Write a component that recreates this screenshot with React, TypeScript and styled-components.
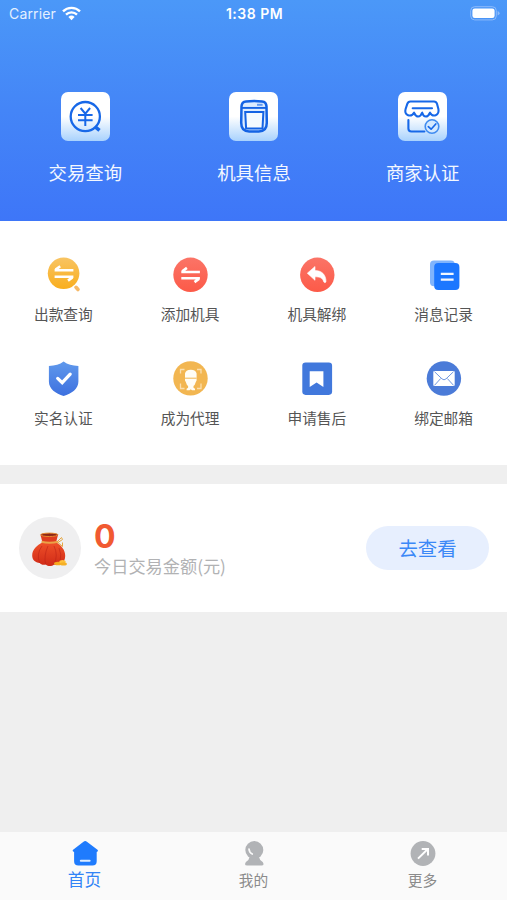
import React from "react";
import styled, { createGlobalStyle } from "styled-components";

const GlobalStyle = createGlobalStyle`
  * { box-sizing: border-box; }
  body {
    margin: 0;
    background: #efefef;
    font-family: "Noto Sans CJK SC", sans-serif;
  }
`;

const Screen = styled.div`
  display: flex;
  flex-direction: column;
  height: 900px;
  background: #efefef;
`;

const Hero = styled.header`
  height: 221px;
  flex: none;
  background: linear-gradient(180deg, #4b98f8 0%, #4485f7 50%, #3e76f8 100%);
`;

const StatusBar = styled.div`
  display: grid;
  grid-template-columns: 1fr auto 1fr;
  align-items: center;
  height: 28px;
  padding: 0 7px 0 9px;
  color: #fff;
  font-family: Inter, sans-serif;
  font-size: 14px;
  line-height: 28px;
`;

const Carrier = styled.div`
  display: flex;
  align-items: center;
  gap: 6px;
  color: #e4f0ff;
  letter-spacing: 0.15px;
  svg { margin-top: -2px; }
`;

const Clock = styled.div`
  font-weight: 600;
  font-size: 14px;
  letter-spacing: 0.5px;
`;

const BatterySlot = styled.div`
  display: flex;
  justify-content: flex-end;
  padding-bottom: 2px;
`;

const HeroActions = styled.nav`
  display: grid;
  grid-template-columns: repeat(3, 1fr);
  padding: 64px 0 0 1px;
`;

const HeroAction = styled.div`
  display: flex;
  flex-direction: column;
  align-items: center;
  gap: 17px;
  color: #f3f8ff;
  font-size: 18.4px;
  line-height: 28px;
`;

const Tile = styled.div`
  width: 49px;
  height: 49px;
  border-radius: 7px;
  background: linear-gradient(180deg, #fff 0%, #fff 50%, #a9d2fd 100%);
`;

const Services = styled.section`
  display: grid;
  grid-template-columns: repeat(4, 1fr);
  grid-auto-rows: 104px;
  height: 244px;
  flex: none;
  padding-top: 36px;
  background: #fff;
`;

const Service = styled.div`
  display: flex;
  flex-direction: column;
  align-items: center;
  gap: 10px;
  color: #555;
  font-size: 14.7px;
  line-height: 22px;
  svg { display: block; }
`;

const Summary = styled.section`
  display: flex;
  align-items: center;
  height: 128px;
  flex: none;
  margin-top: 19px;
  padding: 0 18px 0 19px;
  background: #fff;
`;

const Avatar = styled.div`
  width: 62px;
  height: 62px;
  border-radius: 50%;
  background: #efeff0;
`;

const Figures = styled.div`
  flex: 1;
  padding: 1px 0 0 13px;
`;

const Amount = styled.div`
  color: #f15a31;
  font: 750 32px/35px Inter, sans-serif;
`;

const Caption = styled.div`
  color: #b1b2b4;
  font-size: 17.2px;
  line-height: 24px;
`;

const ViewButton = styled.button`
  width: 123px;
  height: 44px;
  padding: 0;
  border: 0;
  border-radius: 22px;
  background: #e7effe;
  color: #3b88f7;
  font: 19.4px/44px "Noto Sans CJK SC", sans-serif;
`;

const TabBar = styled.nav`
  display: grid;
  grid-template-columns: repeat(3, 1fr);
  height: 68px;
  flex: none;
  margin-top: auto;
  background: #fafafa;
`;

const Tab = styled.div<{ $active?: boolean }>`
  display: flex;
  flex-direction: column;
  align-items: center;
  padding-top: 8px;
  color: ${(p) => (p.$active ? "#3384f6" : "#8b8b8b")};
  font-size: ${(p) => (p.$active ? "16.7px" : "14.7px")};
  line-height: ${(p) => (p.$active ? "22px" : "24px")};
  svg { display: block; }
`;

const WifiIcon = () => (
  <svg width="19" height="15" viewBox="0 0 19 15" fill="none" stroke="#fff" strokeWidth="2.4">
    <path d="M1 5.3a12.2 12.2 0 0 1 17 0M4 8.6a8 8 0 0 1 11 0" />
    <path d="M6.4 11a4.5 4.5 0 0 1 6.2 0L9.5 14.3z" fill="#fff" stroke="none" />
  </svg>
);

const BatteryIcon = () => (
  <svg width="30" height="15" viewBox="0 0 30 15">
    <rect x=".7" y=".7" width="25.6" height="13.2" rx="4" fill="none" stroke="#8dbbfa" />
    <rect x="2.4" y="2.5" width="22.2" height="9.6" rx="2.3" fill="#fff" />
    <path d="M27.6 5v4.6q2-.8 2-2.3T27.6 5z" fill="#8dbbfa" />
  </svg>
);

const TradeIcon = () => (
  <svg width="49" height="49" viewBox="0 0 49 49" fill="none" stroke="#1768e8" strokeWidth="2">
    <circle cx="24.3" cy="24.6" r="14.6" strokeWidth="2.3" />
    <path d="M34.5 35.2l4 3.2" strokeWidth="3.6" />
    <path d="M19.6 16l4.7 5.7 4.8-5.7M17 22.9h14.6M17 28.2h14.6M24.3 22v12" />
  </svg>
);

const DeviceIcon = () => (
  <svg width="49" height="49" viewBox="0 0 49 49" fill="none" stroke="#1463e4">
    <path
      d="M17 9.4q8-.7 16 0 4.300.4 4.500 5l.3 16.400q0 8.600-8 8.800h-9.600q-8-.2-8-8.800l.3-16.400q.2-4.600 4.500-5z"
      strokeWidth="2.5"
      fill="#dcecff"
    />
    <path d="M12.800 15.900h24.400" strokeWidth="1.9" />
    <path d="M28 12.800h5.600" strokeWidth="2" opacity=".6" />
    <path d="M16.200 19.900h18.200l-.9 16.500H17.100z" strokeWidth="2" fill="#f4faff" />
  </svg>
);

const ShopIcon = () => (
  <svg
    width="49"
    height="49"
    viewBox="0 0 49 49"
    fill="none"
    stroke="#1768e8"
    strokeWidth="2.1"
    strokeLinejoin="round"
    strokeLinecap="round"
  >
    <path d="M12.4 9.500h23.600q2.300 0 3 2.300l1.400 5.200c1.200 6.500-5.600 8.700-8.400 3.700-2.300 5.100-6.200 5.100-7.800 0-2 5.100-5.800 5.100-8.200 0-2.800 5-10.200 2.800-8.400-3.700l1.700-5.200q.8-2.300 3.100-2.300z" />
    <path d="M14.700 16.200h19.300M10.400 28v8.500q0 3 3 3h13" />
    <circle cx="34" cy="34.5" r="6.8" strokeWidth="1.6" fill="#d4e9ff" stroke="#408cf0" />
    <path d="M30.300 34.700l2.800 2.500 4.700-5.200" strokeWidth="1.7" />
  </svg>
);

const Gradient = ({ id, from, to }: { id: string; from: string; to: string }) => (
  <defs>
    <linearGradient id={id} x1="0" y1="0" x2="0" y2="1">
      <stop stopColor={from} />
      <stop offset="1" stopColor={to} />
    </linearGradient>
  </defs>
);

const SearchPayIcon = () => (
  <svg width="36" height="36" viewBox="0 0 36 36">
    <Gradient id="pay" from="#f8c463" to="#f9ae1d" />
    <circle cx="18.6" cy="16.3" r="15.8" fill="url(#pay)" />
    <path d="M31 30.300l2 2.200" stroke="#f6b968" strokeWidth="3.6" strokeLinecap="round" />
    <path d="M9.600 13.300h18.800M10.600 12.600l4.600-3.300M9.600 19.700h18.800M27.400 20.400l-4.400 3.200" stroke="#fff" strokeWidth="2.6" />
  </svg>
);

const AddDeviceIcon = () => (
  <svg width="36" height="36" viewBox="0 0 36 36">
    <Gradient id="add" from="#fb7467" to="#fc5a48" />
    <circle cx="18.5" cy="17.8" r="17.2" fill="url(#add)" />
    <path d="M9.300 15h18.600M10.300 14.300l4.600-3.400M9.300 21.200h18.600M26.900 21.900l-4.400 3.200" stroke="#fff" strokeWidth="2.6" />
  </svg>
);

const UnbindIcon = () => (
  <svg width="36" height="36" viewBox="0 0 36 36">
    <Gradient id="unbind" from="#fb7467" to="#fc5a48" />
    <circle cx="18.3" cy="17.8" r="17.2" fill="url(#unbind)" />
    <path
      d="M8.300 16.200l7.700-6.700v4c6.800 0 11.200 4.400 11 11.400-.8 1-1.700.8-2.200 0-1.300-4-3.800-5.100-8.800-5.100v3.500z"
      fill="#fff"
      stroke="#fff"
      strokeWidth=".6"
      strokeLinejoin="round"
    />
  </svg>
);

const MessageIcon = () => (
  <svg width="36" height="36" viewBox="0 0 36 36">
    <rect x="4" y="3.6" width="24.8" height="25.6" rx="4" fill="#80b4fc" />
    <rect x="8.2" y="6" width="25.2" height="26.9" rx="4" fill="#1c77ff" />
    <path d="M14.800 16.900h12.800M14.800 22.700h12.800" stroke="#f3f8ff" strokeWidth="2.2" />
  </svg>
);

const ShieldIcon = () => (
  <svg width="36" height="36" viewBox="0 0 36 36">
    <Gradient id="shield" from="#6099ec" to="#3d70df" />
    <path
      d="M18.600.6c4 3 8.600 4.200 14.800 4.500v15.400c0 7.500-6.800 12-14.800 14.600C10.700 32.500 3.900 28 3.900 20.500V5.100C10.100 4.800 14.700 3.600 18.600.6z"
      fill="url(#shield)"
    />
    <path d="M12.700 17.400l4.500 4.300 8-8.500" fill="none" stroke="#fff" strokeWidth="3.2" strokeLinecap="round" />
  </svg>
);

const AgentIcon = () => (
  <svg width="36" height="36" viewBox="0 0 36 36">
    <circle cx="18.5" cy="17.4" r="17.2" fill="#f2b651" />
    <path
      d="M8.500 12.500V8.500h4M25 8.500h4v4M8.500 22.500v5h4M25 27.500h4v-5"
      fill="none"
      stroke="#fbdfae"
      strokeWidth="1.3"
    />
    <path
      d="M13 12.500q.6-3.800 5.800-3.800t5.800 3.800v5q.4 2-.8 3.500-.8 3-2.300 4v1.800l1.500.9v1.500h-3l-1.200-1-1.200 1h-3v-1.500l1.500-.9V25q-1.500-1-2.300-4-1.200-1.500-.8-3.500z"
      fill="#fffdf5"
    />
    <path d="M13 17.200h11.600" stroke="#f2b651" strokeWidth="1" />
  </svg>
);

const BookmarkIcon = () => (
  <svg width="36" height="36" viewBox="0 0 36 36">
    <rect x="3.3" y="1.5" width="29.8" height="32.4" rx="3.3" fill="#4178dc" />
    <path d="M10.700 10.200h13.700v15.800l-6.800-4.400-6.900 4.400z" fill="#fff" />
  </svg>
);

const MailIcon = () => (
  <svg width="36" height="36" viewBox="0 0 36 36">
    <circle cx="17.9" cy="17.5" r="17.2" fill="#4b7bd8" />
    <rect x="7.3" y="9.9" width="21.4" height="15.2" rx="1" fill="#fff" />
    <path
      d="M8.500 10.700l7.500 7.200q2 1.800 4 0l7.500-7.200M8.500 24.300l6.200-6.800M27.500 24.300l-6.200-6.800"
      fill="none"
      stroke="#7097df"
      strokeWidth="1"
    />
  </svg>
);

const MoneyBagIcon = () => (
  <svg width="62" height="62" viewBox="0 0 62 62">
    <Gradient id="bag" from="#ee5029" to="#d02a17" />
    <path d="M21.500 18q9-3 17.500 0l-2 7.500H23.500z" fill="#df3c20" />
    <ellipse cx="30.3" cy="17.8" rx="8.6" ry="1.7" fill="#8e2718" stroke="#e98a30" strokeWidth="1" />
    <path
      d="M23.500 25.500h14c5 3 8.700 7.700 8.700 13 0 4.500-1.600 7.300-5 8-1.800 1.500-4 2-6 1-2.700 2-6 2-8.500 0-2.400.8-4.800.2-6-1.500-4.500-.5-7.500-3-7.500-7.500 0-6 4.800-10.500 10.300-13z"
      fill="url(#bag)"
    />
    <path
      d="M23 29q-6 8-2.300 17M29 29q-4.500 10-2.300 18.500M35 29q4.500 9 0 18.500M40 31q3 6 1 14"
      fill="none"
      stroke="#b92116"
      strokeWidth="1"
      opacity=".55"
    />
    <path d="M22.500 24.800q8 2 16.500 0" fill="none" stroke="#eba247" strokeWidth="2" />
    <path d="M38 25l4.500-4.500 1 2-4.500 3 4.500 4v-4" fill="none" stroke="#e5a743" strokeWidth="1" />
    <ellipse cx="39" cy="46.5" rx="4" ry="1.8" fill="#f6a81d" />
    <ellipse cx="43.5" cy="44.8" rx="3.2" ry="1.8" fill="#ffc13a" />
    <ellipse cx="44.5" cy="46.9" rx="3.4" ry="1.6" fill="#f5b026" />
  </svg>
);

const HomeIcon = () => (
  <svg width="28" height="28" viewBox="0 0 28 28">
    <path
      d="M12.500 1.700q1.700-1.400 3.400 0l10.600 8q1.300 1.500-.8 2.200v9.300q0 4.300-4.300 4.300H7.400q-4.300 0-4.300-4.300v-9.300q-2.300-.7-1-2.200z"
      fill="#1f7bfd"
    />
    <path d="M9.800 20.800h8.800" stroke="#dcebff" strokeWidth="2" strokeLinecap="round" />
  </svg>
);

const PersonIcon = () => (
  <svg width="28" height="28" viewBox="0 0 28 28">
    <circle cx="14.3" cy="10" r="9" fill="#b1b3b6" />
    <path d="M10 16h8.600q.8 4 4.100 6 2.200 3.500-1.300 3.500H7.200q-3.500 0-1.300-3.500 3.300-2 4.100-6z" fill="#b1b3b6" />
    <path d="M9 9q.2 3.500 3.300 5" fill="none" stroke="#fafafa" strokeWidth="1.7" strokeLinecap="round" />
  </svg>
);

const MoreIcon = () => (
  <svg width="28" height="28" viewBox="0 0 28 28">
    <circle cx="14" cy="13.5" r="12.4" fill="#b1b3b6" />
    <path d="M9 18.600L18.800 9M12.700 8.900h6.300v6.500" fill="none" stroke="#fff" strokeWidth="2" />
  </svg>
);

const heroActions = [
  { label: "交易查询", Icon: TradeIcon },
  { label: "机具信息", Icon: DeviceIcon },
  { label: "商家认证", Icon: ShopIcon },
];

const services = [
  { label: "出款查询", Icon: SearchPayIcon },
  { label: "添加机具", Icon: AddDeviceIcon },
  { label: "机具解绑", Icon: UnbindIcon },
  { label: "消息记录", Icon: MessageIcon },
  { label: "实名认证", Icon: ShieldIcon },
  { label: "成为代理", Icon: AgentIcon },
  { label: "申请售后", Icon: BookmarkIcon },
  { label: "绑定邮箱", Icon: MailIcon },
];

const tabs = [
  { label: "首页", Icon: HomeIcon, active: true },
  { label: "我的", Icon: PersonIcon },
  { label: "更多", Icon: MoreIcon },
];

export default function App() {
  return (
    <>
      <GlobalStyle />
      <Screen>
        <Hero>
          <StatusBar>
            <Carrier>
              Carrier
              <WifiIcon />
            </Carrier>
            <Clock>1:38 PM</Clock>
            <BatterySlot>
              <BatteryIcon />
            </BatterySlot>
          </StatusBar>
          <HeroActions>
            {heroActions.map(({ label, Icon }) => (
              <HeroAction key={label}>
                <Tile>
                  <Icon />
                </Tile>
                {label}
              </HeroAction>
            ))}
          </HeroActions>
        </Hero>
        <Services>
          {services.map(({ label, Icon }) => (
            <Service key={label}>
              <Icon />
              {label}
            </Service>
          ))}
        </Services>
        <Summary>
          <Avatar>
            <MoneyBagIcon />
          </Avatar>
          <Figures>
            <Amount>0</Amount>
            <Caption>今日交易金额(元)</Caption>
          </Figures>
          <ViewButton>去查看</ViewButton>
        </Summary>
        <TabBar>
          {tabs.map(({ label, Icon, active }) => (
            <Tab key={label} $active={active}>
              <Icon />
              {label}
            </Tab>
          ))}
        </TabBar>
      </Screen>
    </>
  );
}
